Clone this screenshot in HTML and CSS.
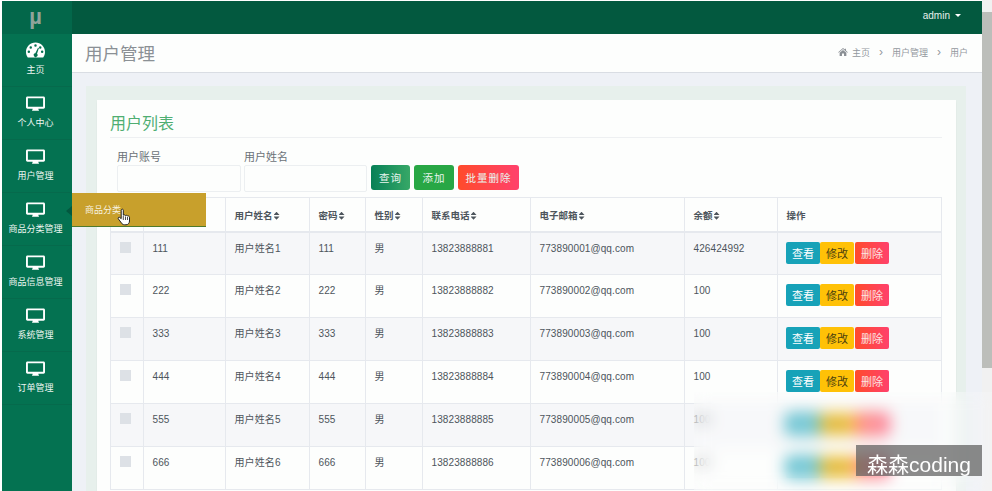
FILE: index.html
```html
<!DOCTYPE html>
<html lang="zh">
<head>
  <meta charset="UTF-8">
  <meta name="viewport" content="width=device-width, initial-scale=1.0">
  <title>用户管理</title>
  <link rel="stylesheet" href="styles.css">
</head>
<body>

  <!-- 左侧菜单 -->
  <div class="sidebar">
    <div class="logo">µ</div>
    <div class="nav-item nav-home">
      <svg class="nav-icon" viewBox="0 0 20 16"><path fill="#fff" fill-rule="evenodd" d="M10 0C4.500 0 0 4.400 0 10c0 2.200.7 4.200 1.900 5.800.2.100.4.200.6.200h15c.2 0 .4-.1.6-.2C19.300 14.200 20 12.200 20 10c0-5.600-4.500-10-10-10zM10 2a1.300 1.300 0 110 2.600A1.300 1.300 0 0110 2zM5 4a1.300 1.300 0 110 2.600A1.300 1.300 0 015 4zM15 4a1.300 1.300 0 110 2.600A1.300 1.300 0 0115 4zM3 8.500a1.300 1.300 0 110 2.600 1.300 1.300 0 010-2.600zM17 8.500a1.300 1.300 0 110 2.600 1.300 1.300 0 010-2.600zM12.700 5.500l.9.400-2 6.100a2 2 0 11-1.800-.600z"/></svg>
      <span>主页</span>
    </div>
    <div class="nav-item">
      <svg class="nav-icon" viewBox="0 0 20 16"><use href="#monitor"/></svg>
      <span>个人中心</span>
    </div>
    <div class="nav-item">
      <svg class="nav-icon" viewBox="0 0 20 16"><use href="#monitor"/></svg>
      <span>用户管理</span>
    </div>
    <div class="nav-item">
      <svg class="nav-icon" viewBox="0 0 20 16"><use href="#monitor"/></svg>
      <span>商品分类管理</span>
      <div class="nav-arrow"></div>
    </div>
    <div class="nav-item">
      <svg class="nav-icon" viewBox="0 0 20 16"><use href="#monitor"/></svg>
      <span>商品信息管理</span>
    </div>
    <div class="nav-item">
      <svg class="nav-icon" viewBox="0 0 20 16"><use href="#monitor"/></svg>
      <span>系统管理</span>
    </div>
    <div class="nav-item">
      <svg class="nav-icon" viewBox="0 0 20 16"><use href="#monitor"/></svg>
      <span>订单管理</span>
    </div>
  </div>

  <svg class="defs"><defs>
    <path id="monitor" fill="#fff" fill-rule="evenodd" d="M1.500 0h17c.8 0 1.500.7 1.500 1.500v10c0 .8-.7 1.500-1.500 1.500H13c0 .8.300 1.500.8 2H6.200c.5-.5.800-1.200.8-2H1.500C.7 13 0 12.300 0 11.500v-10C0 .7.700 0 1.500 0zM2 2v9h16V2z"/>
  </defs></svg>

  <div class="main">
    <div class="topbar"><span class="user">admin</span><span class="caret"></span></div>

    <div class="page-head">
      <h1>用户管理</h1>
      <div class="crumbs">
        <svg class="home" viewBox="0 0 12 10"><path fill="#8a8f94" d="M6 0l2.300 2V1h1.400v2.200L12 5.200l-.6.600L6 1.300.6 5.800 0 5.200zM1.800 6L6 2.500 10.200 6v4H7.300V7H4.700v3H1.800z"/></svg>
        <span>主页</span><span class="sep">›</span><span>用户管理</span><span class="sep">›</span><span>用户</span>
      </div>
    </div>

    <div class="content">
      <div class="band">
        <div class="card">
          <h2>用户列表</h2>

          <div class="search">
            <div class="field"><label>用户账号</label><input type="text"></div>
            <div class="field field-second"><label>用户姓名</label><input type="text"></div>
            <button class="btn btn-query">查询</button>
            <button class="btn btn-add">添加</button>
            <button class="btn btn-batch">批量删除</button>
          </div>

          <table>
            <thead>
              <tr>
                <th class="c-check"></th>
                <th class="c-account"></th>
                <th class="c-name">用户姓名<i class="sort"></i></th>
                <th class="c-pwd">密码<i class="sort"></i></th>
                <th class="c-sex">性别<i class="sort"></i></th>
                <th class="c-phone">联系电话<i class="sort"></i></th>
                <th class="c-mail">电子邮箱<i class="sort"></i></th>
                <th class="c-money">余额<i class="sort"></i></th>
                <th>操作</th>
              </tr>
            </thead>
            <tbody>
              <tr>
                <td><span class="check"></span></td><td>111</td><td>用户姓名1</td><td>111</td><td>男</td><td>13823888881</td><td>773890001@qq.com</td><td>426424992</td>
                <td class="ops"><button class="op op-view">查看</button><button class="op op-edit">修改</button><button class="op op-del">删除</button></td>
              </tr>
              <tr>
                <td><span class="check"></span></td><td>222</td><td>用户姓名2</td><td>222</td><td>男</td><td>13823888882</td><td>773890002@qq.com</td><td>100</td>
                <td class="ops"><button class="op op-view">查看</button><button class="op op-edit">修改</button><button class="op op-del">删除</button></td>
              </tr>
              <tr>
                <td><span class="check"></span></td><td>333</td><td>用户姓名3</td><td>333</td><td>男</td><td>13823888883</td><td>773890003@qq.com</td><td>100</td>
                <td class="ops"><button class="op op-view">查看</button><button class="op op-edit">修改</button><button class="op op-del">删除</button></td>
              </tr>
              <tr>
                <td><span class="check"></span></td><td>444</td><td>用户姓名4</td><td>444</td><td>男</td><td>13823888884</td><td>773890004@qq.com</td><td>100</td>
                <td class="ops"><button class="op op-view">查看</button><button class="op op-edit">修改</button><button class="op op-del">删除</button></td>
              </tr>
              <tr>
                <td><span class="check"></span></td><td>555</td><td>用户姓名5</td><td>555</td><td>男</td><td>13823888885</td><td>773890005@qq.com</td><td>100</td>
                <td class="ops"><button class="op op-view">查看</button><button class="op op-edit">修改</button><button class="op op-del">删除</button></td>
              </tr>
              <tr>
                <td><span class="check"></span></td><td>666</td><td>用户姓名6</td><td>666</td><td>男</td><td>13823888886</td><td>773890006@qq.com</td><td>100</td>
                <td class="ops"><button class="op op-view">查看</button><button class="op op-edit">修改</button><button class="op op-del">删除</button></td>
              </tr>
            </tbody>
          </table>
        </div>
      </div>
    </div>
  </div>

  <div class="scrollbar"><div class="thumb"></div></div>

  <!-- 悬浮的子菜单 -->
  <div class="flyout">商品分类</div>
  <svg class="pointer" viewBox="0 0 14 18"><path fill="#fff" stroke="#222" stroke-width="1" d="M4.500 1.500c.7-.7 1.800-.3 1.800.7v5c.8-.5 1.700-.4 2.200.3.800-.4 1.700-.2 2 .5.900-.3 2 .2 2 1.300v3.700c0 2.100-1.400 3.800-3.500 3.800H7.500c-1.300 0-2.200-.6-3-1.700L1.300 10.800c-.6-1 .6-2.100 1.600-1.300l1.300 1.200V2.200c0-.3.100-.5.300-.7z"/><path stroke="#222" stroke-width=".8" d="M6.300 8v4M8.500 8.500V12M10.500 9v3"/></svg>

  <div class="blur-patch"></div>
  <div class="watermark">森森coding</div>

</body>
</html>
```

FILE: styles.css
```css
html, body {
  height: 100%;
  margin: 0;
  overflow: hidden;
}
body {
  font-family: "Liberation Sans", "Noto Sans CJK SC", sans-serif;
  display: flex;
  background-color: #eef1f6;
  color: #4d555c;
  font-size: 10px;
  border-left: 2px solid #fff;
  border-top: 1px solid #fff;
  box-sizing: border-box;
}
.defs {
  position: absolute;
  width: 0;
  height: 0;
}

/* sidebar */
.sidebar {
  width: 70px;
  flex-shrink: 0;
  background-color: #047251;
  color: #fff;
}
.logo {
  height: 33px;
  padding-right: 3px;
  background-color: #03674a;
  color: #8fa39b;
  font-size: 22px;
  font-weight: bold;
  line-height: 31px;
  text-align: center;
}
.nav-item {
  position: relative;
  height: 52px;
  padding-right: 3px;
  border-bottom: 1px solid #066a4c;
  display: flex;
  flex-direction: column;
  align-items: center;
  font-size: 9px;
  line-height: 12px;
  color: #eef6f2;
  white-space: nowrap;
}
.nav-icon {
  width: 19px;
  height: 16px;
  margin-top: 9px;
  margin-bottom: 5px;
}
.nav-home .nav-icon {
  margin-top: 8px;
  margin-bottom: 6px;
}
.nav-arrow {
  position: absolute;
  right: 0;
  top: 13px;
  border: 5px solid transparent;
  border-right: 6px solid #03583f;
  border-left-width: 0;
}

/* main */
.main {
  flex: 1;
  min-width: 0;
  margin-right: 10px;
  display: flex;
  flex-direction: column;
}
.topbar {
  height: 33px;
  box-sizing: border-box;
  background-color: #03593f;
  display: flex;
  justify-content: flex-end;
  align-items: center;
  padding: 0 21px 4px 0;
  color: #e6f0ec;
}
.caret {
  margin-left: 5px;
  border: 3px solid transparent;
  border-top-color: #fff;
  border-bottom-width: 0;
}
.page-head {
  height: 36px;
  flex-shrink: 0;
  background-color: #fdfefd;
  border-bottom: 1px solid #d9dde3;
  display: flex;
  justify-content: space-between;
  align-items: center;
  padding: 0 14px 2px 13px;
}
.page-head h1 {
  margin: 0;
  font-size: 17.500px;
  font-weight: normal;
  color: #8b9095;
}
.crumbs {
  display: flex;
  align-items: center;
  gap: 4px;
  color: #93989d;
  font-size: 9px;
}
.home {
  width: 10px;
  height: 8px;
}
.sep {
  margin: 0 5px;
  font-size: 12px;
}
.content {
  flex: 1;
  min-height: 0;
  display: flex;
  padding: 13px 16px 0 14px;
}
.band {
  flex: 1;
  display: flex;
  background-color: #e7f0ec;
  padding: 14px 10px 0 11px;
}
.card {
  flex: 1;
  background-color: #fdfefd;
  padding: 13px 14px 0 13px;
  box-shadow: 0 1px 2px rgba(0, 0, 0, 0.05);
}
.card h2 {
  margin: 0;
  padding-bottom: 2px;
  font-size: 16px;
  line-height: 22px;
  font-weight: normal;
  color: #4fae72;
  border-bottom: 1px solid #eef0f2;
}

/* search row */
.search {
  display: flex;
  align-items: flex-end;
  padding: 12px 0 5px 7px;
}
.field label {
  display: block;
  font-size: 11px;
  line-height: 15px;
  color: #6b7278;
}
.field input {
  display: block;
  width: 124px;
  height: 27px;
  padding: 0;
  box-sizing: border-box;
  border: 1px solid #eceff1;
  border-radius: 2px;
  background: #fdfefd;
}
.field-second {
  margin-left: 3px;
}
.field-second input {
  width: 123px;
}
.btn {
  height: 25px;
  border: none;
  border-radius: 3px;
  color: #e9f5ef;
  font: 10.500px "Liberation Sans", "Noto Sans CJK SC", sans-serif;
  letter-spacing: 1px;
  margin-left: 4px;
  margin-bottom: 2px;
  padding: 0;
}
.btn-query {
  width: 39px;
  background-image: linear-gradient(to right, #078057, #37a867);
}
.btn-add {
  width: 40px;
  background-color: #28a745;
}
.btn-batch {
  width: 61px;
  background-image: linear-gradient(to right, #ff4b2b, #ff416c);
}

/* table */
table {
  border-collapse: collapse;
  table-layout: fixed;
  width: 832px;
  font-size: 10px;
}
th, td {
  border: 1px solid #e6e9ee;
  padding: 0 9px 0 8.500px;
  text-align: left;
  box-sizing: border-box;
}
th {
  height: 34px;
  padding-top: 1px;
  border-bottom-width: 2px;
  color: #4d555c;
  font-size: 9.500px;
  font-weight: bold;
  white-space: nowrap;
}
td {
  height: 43px;
  vertical-align: top;
  padding-top: 9px;
  line-height: 14px;
  letter-spacing: 0.1px;
}
tbody tr:nth-child(odd) {
  background-color: #f6f7f9;
}
.c-check { width: 33px; }
.c-account { width: 82px; }
.c-name { width: 84px; }
.c-pwd { width: 56px; }
.c-sex { width: 57px; }
.c-phone { width: 108px; }
.c-mail { width: 154px; }
.c-money { width: 93px; }
.sort {
  display: inline-block;
  width: 6px;
  height: 8px;
  margin-left: 1px;
  vertical-align: -1px;
  background-color: #4d555c;
  clip-path: polygon(50% 0, 100% 42%, 0 42%, 50% 0, 0 58%, 100% 58%, 50% 100%, 0 58%);
}
.check {
  display: block;
  width: 11px;
  height: 11px;
  background-color: #dde1e6;
}
.ops {
  padding-top: 9px;
  padding-left: 8px;
  font-size: 0;
}
.op {
  width: 34px;
  height: 22px;
  padding: 0;
  border: none;
  border-radius: 2px;
  font: 11px "Liberation Sans", "Noto Sans CJK SC", sans-serif;
  vertical-align: top;
}
.op-view {
  background-color: #17a2b8;
  color: #fff;
}
.op-edit {
  background-color: #ffc107;
  color: #4a4010;
  margin-right: 1px;
}
.op-del {
  background-image: linear-gradient(to right, #ff4b2b, #ff416c);
  color: #fbe4e4;
}

/* things on top of the page */
.scrollbar {
  position: absolute;
  top: 0;
  right: 0;
  bottom: 0;
  width: 10px;
  background-color: #f1f1f1;
}
.thumb {
  margin-top: 12px;
  height: 356px;
  background-color: #bcbeba;
}
.flyout {
  position: absolute;
  left: 72px;
  top: 193px;
  width: 134px;
  height: 34px;
  box-sizing: border-box;
  padding-left: 13px;
  background-color: #c8a02c;
  border-bottom: 1px solid #4f7a2c;
  color: #f7f2e0;
  font-size: 9px;
  line-height: 34px;
}
.pointer {
  position: absolute;
  left: 117px;
  top: 208px;
  width: 14px;
  height: 18px;
}
.blur-patch {
  position: absolute;
  left: 694px;
  top: 392px;
  right: 0;
  bottom: 0;
  backdrop-filter: blur(8px);
  background-color: rgba(255, 255, 255, 0.2);
}
.watermark {
  position: absolute;
  left: 856px;
  top: 445px;
  width: 126px;
  height: 31px;
  background-color: rgba(90, 90, 90, 0.7);
  color: #fff;
  font-size: 21px;
  line-height: 40px;
  text-align: center;
}
```
